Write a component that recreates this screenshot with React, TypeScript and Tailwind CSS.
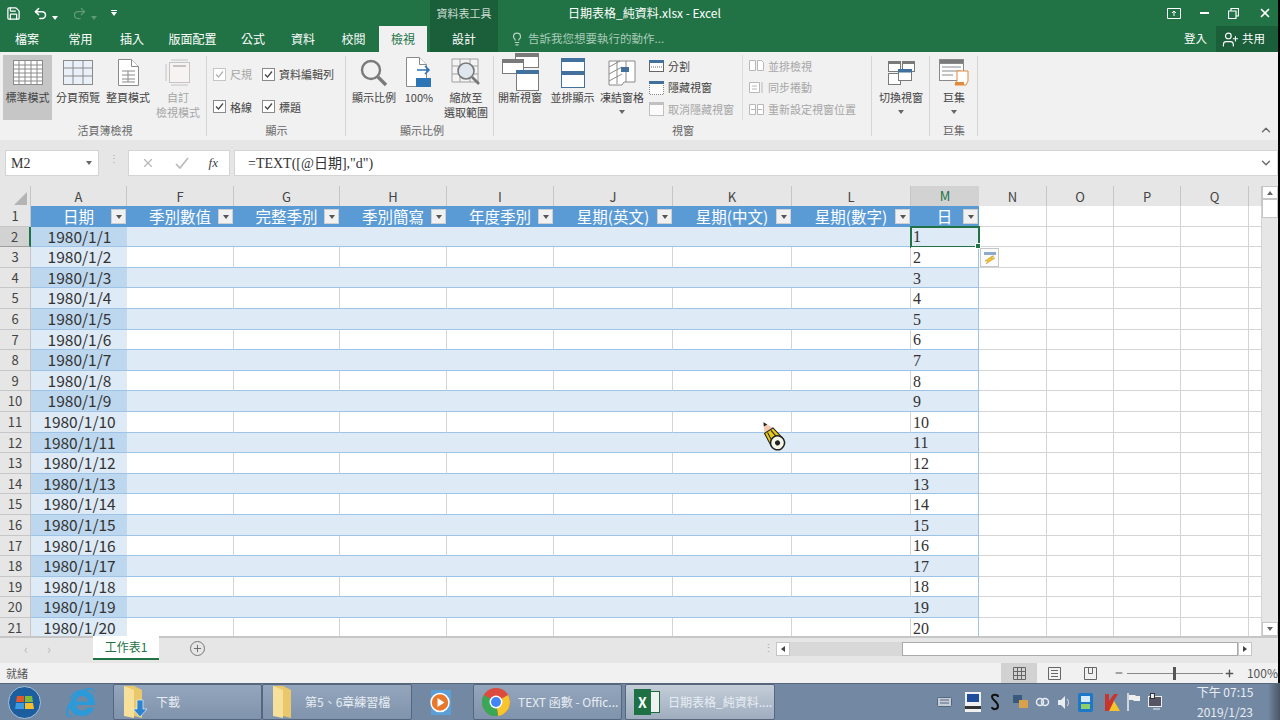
import { FaInternetExplorer } from "react-icons/fa";
import { ChevronDown, ChevronUp, Lightbulb, Minus, Plus, Redo2, Save, Undo2, UserPlus, X } from "lucide-react";

const cols = ["A", "F", "G", "H", "I", "J", "K", "L", "M", "N", "O", "P", "Q", ""];
const heads = ["日期", "季別數值", "完整季別", "季別簡寫", "年度季別", "星期(英文)", "星期(中文)", "星期(數字)", "日"];
const rows = Array.from({ length: 20 }, (_, i) => i + 1);
const gridCols = "grid grid-cols-[31px_96px_107px_106px_107px_107px_119px_119px_119px_68px_68px_67px_67px_68px_13px]";

function Tri({ className = "border-t-[#666]" }: { className?: string }) {
  return <span className={`inline-block h-0 w-0 border-x-[3px] border-t-[4px] border-x-transparent ${className}`} />;
}

function BigBtn({ icon, label, w, active, off, arrow }: { icon: React.ReactNode; label: string[]; w: string; active?: boolean; off?: boolean; arrow?: boolean }) {
  return (
    <div className={`flex h-[65px] flex-col items-center ${w} ${active ? "bg-[#c6c6c6]" : ""} ${off ? "text-[#a6a6a6]" : "text-[#444]"}`}>
      <div className="flex h-[35px] items-center justify-center">{icon}</div>
      {label.map((l) => (
        <div key={l} className="whitespace-nowrap text-[11px] leading-[15px]">{l}</div>
      ))}
      {arrow && <div className="mt-[1px] flex h-[12px] items-center"><Tri /></div>}
    </div>
  );
}

function Group({ w, label, children }: { w: string; label: string; children: React.ReactNode }) {
  return (
    <div className={`relative flex shrink-0 flex-col ${w}`}>
      <div className="mt-[3px] flex h-[65px]">{children}</div>
      <div className="mt-[3px] text-center text-[11px] leading-[15px] text-[#666]">{label}</div>
      <div className="absolute right-0 top-[4px] h-[80px] w-px bg-[#d6d6d6]" />
    </div>
  );
}

function Check({ label, off, w }: { label: string; off?: boolean; w?: string }) {
  return (
    <div className={`flex items-center gap-[4px] text-[11px] ${w ?? ""} ${off ? "text-[#a6a6a6]" : "text-[#444]"}`}>
      <span className={`flex h-[13px] w-[13px] items-center justify-center border bg-white ${off ? "border-[#c6c6c6]" : "border-[#8a8a8a]"}`}>
        <svg width="9" height="9" viewBox="0 0 9 9" fill="none" stroke={off ? "#b0b0b0" : "#444"} strokeWidth="1.2"><path d="M1 4.5 3.5 7 8 1.5" /></svg>
      </span>
      {label}
    </div>
  );
}

function Small({ icon, label, off }: { icon: React.ReactNode; label: string; off?: boolean }) {
  return (
    <div className={`flex h-[22px] items-center gap-[4px] whitespace-nowrap text-[11px] ${off ? "text-[#a6a6a6]" : "text-[#444]"}`}>
      <span className="flex w-[15px] justify-center">{icon}</span>
      {label}
    </div>
  );
}

const Sheet = ({ dashed }: { dashed?: boolean }) => (
  <svg width="30" height="25" viewBox="0 0 30 25" fill={dashed ? "#eaf0f8" : "#fff"} stroke="#8a8a8a" strokeWidth="1">
    <rect x=".5" y=".5" width="29" height="24" />
    <path d={dashed ? "M10 1v23M20 1v23M1 8h28M1 16h28" : "M6 1v23M12 1v23M18 1v23M24 1v23M1 5h28M1 9h28M1 13h28M1 17h28M1 21h28"} />
  </svg>
);

const WinIcon = () => (
  <svg width="37" height="39" viewBox="0 0 37 39" fill="#fff" stroke="#7a7a7a">
    <rect x="13.5" y=".5" width="23" height="14" /><rect x="13.5" y=".5" width="23" height="3" fill="#7a7a7a" />
    <rect x=".5" y="6.5" width="21" height="14" /><rect x=".5" y="6.5" width="21" height="3" fill="#7a7a7a" />
    <rect x="14.5" y="17.5" width="22" height="20" /><rect x="14.5" y="17.5" width="22" height="3" fill="#41719c" stroke="#41719c" />
  </svg>
);

const Mag = ({ s = 28 }: { s?: number }) => (
  <svg width={s} height={s} viewBox="0 0 28 28" fill="none" stroke="#7a7a7a"><circle cx="11" cy="11" r="9" strokeWidth="2.4" /><path d="m18 18 8 8" strokeWidth="3.4" /></svg>
);

function Ribbon() {
  return (
    <div className="flex h-[88px] bg-[#f1f1f1]">
      <Group w="w-[207px] pl-[3px]" label="活頁簿檢視">
        <BigBtn w="w-[49px]" active label={["標準模式"]} icon={<Sheet />} />
        <BigBtn w="w-[52px]" label={["分頁預覽"]} icon={<Sheet dashed />} />
        <BigBtn w="w-[48px]" label={["整頁模式"]} icon={
          <svg width="21" height="27" viewBox="0 0 21 27" fill="#fff" stroke="#8a8a8a"><path d="M.5.5h13l7 7v19H.5z" /><path d="M13.5.5v7h7M4 12h13M4 16h13M4 20h13M4 23h13M10 12v11" /></svg>
        } />
        <BigBtn w="w-[52px]" off label={["自訂", "檢視模式"]} icon={
          <svg width="27" height="27" viewBox="0 0 27 27" fill="none" stroke="#c4c4c4"><rect x="4.5" y="3.5" width="20" height="20" fill="#f7f3f3" /><path d="M8 7h13" strokeWidth="2" /><path d="M1 5v17M6 1h17M6 26h17" /></svg>
        } />
      </Group>
      <Group w="w-[139px]" label="顯示">
        <div className="flex flex-col gap-[16px] pl-[6px] pt-[11px]">
          <Check off w="w-[49px]" label="尺規" />
          <Check w="w-[49px]" label="格線" />
        </div>
        <div className="flex flex-col gap-[16px] pt-[11px]">
          <Check label="資料編輯列" />
          <Check label="標題" />
        </div>
      </Group>
      <Group w="w-[148px] pl-[4px]" label="顯示比例">
        <BigBtn w="w-[48px]" label={["顯示比例"]} icon={<Mag />} />
        <BigBtn w="w-[42px]" label={["100%"]} icon={
          <svg width="26" height="31" viewBox="0 0 26 31" fill="#fff" stroke="#8a8a8a"><path d="M.5.5h13l7 7v22H.5z" /><path d="M13.5.5v7h7" /><rect x="10" y="21" width="15" height="9" fill="#2e75b6" stroke="none" /><path d="M11 13h12m-4-4 4 4-4 4" fill="none" stroke="#2e75b6" strokeWidth="1.6" /></svg>
        } />
        <BigBtn w="w-[52px]" label={["縮放至", "選取範圍"]} icon={
          <svg width="30" height="30" viewBox="0 0 30 30" fill="#f4f4f4" stroke="#a0a0a0"><path d="M1 1h26v23H1zM9 1v23M19 1v23M1 8h26M1 16h26" /><circle cx="15" cy="13" r="8" fill="#dfe6ee" stroke="#777" strokeWidth="1.6" /><path d="m21 19 7 7" stroke="#777" strokeWidth="2.6" /></svg>
        } />
      </Group>
      <Group w="w-[378px]" label="視窗">
        <BigBtn w="w-[52px]" label={["開新視窗"]} icon={<WinIcon />} />
        <BigBtn w="w-[53px]" label={["並排顯示"]} icon={
          <svg width="24" height="30" viewBox="0 0 24 30" fill="#fff" stroke="#41719c"><rect x=".5" y=".5" width="23" height="14" /><rect x=".5" y=".5" width="23" height="3" fill="#41719c" /><rect x=".5" y="13.5" width="23" height="16" /><rect x=".5" y="13.5" width="23" height="3" fill="#41719c" /></svg>
        } />
        <BigBtn w="w-[46px]" arrow label={["凍結窗格"]} icon={
          <svg width="28" height="26" viewBox="0 0 28 26" fill="#fff" stroke="#8a8a8a"><path d="M1 1h26v21H16l-2 3H1z" /><path d="M1 7 12 1M1 14 14 7M1 21 14 14M9 1v23M18 1v21" /><rect x="13" y="7" width="8" height="5" fill="#41719c" stroke="none" /></svg>
        } />
        <div className="flex w-[97px] flex-col pl-[4px] pt-[0px]">
          <Small label="分割" icon={<svg width="15" height="12" viewBox="0 0 15 12" fill="#fff" stroke="#666"><rect x=".5" y=".5" width="14" height="11" /><rect x=".5" y=".5" width="14" height="2" fill="#41719c" stroke="#41719c" /><path d="M2 7h11" strokeDasharray="1 1" /></svg>} />
          <Small label="隱藏視窗" icon={<svg width="15" height="14" viewBox="0 0 15 14" fill="#fff" stroke="#888"><path d="M.5 2v11.5h14V2" strokeDasharray="1 1" /><rect x=".5" y=".5" width="14" height="2" fill="#41719c" stroke="#41719c" /></svg>} />
          <Small off label="取消隱藏視窗" icon={<svg width="15" height="14" viewBox="0 0 15 14" fill="#fbfbfb" stroke="#c0c0c0"><rect x=".5" y=".5" width="14" height="13" /><rect x=".5" y=".5" width="14" height="2" fill="#c0c0c0" /></svg>} />
        </div>
        <div className="flex flex-col border-l border-[#dcdcdc] pl-[6px]">
          <Small off label="並排檢視" icon={<svg width="15" height="11" viewBox="0 0 15 11" fill="#fff" stroke="#b8b8b8"><path d="M.5.5h6v10h-6zM8.5.5h4l2 2v8h-6z" /></svg>} />
          <Small off label="同步捲動" icon={<svg width="15" height="13" viewBox="0 0 15 13" fill="#fff" stroke="#b8b8b8"><path d="M.5 1.500h10v10h-10zM3 5h5M3 8h5M13 1v11" /></svg>} />
          <Small off label="重新設定視窗位置" icon={<svg width="15" height="11" viewBox="0 0 15 11" fill="#fff" stroke="#b8b8b8"><path d="M.5.5h6v10h-6zM8.500.5h6v10h-6zM9 5.500h4M2 5.500h4" /></svg>} />
        </div>
      </Group>
      <Group w="w-[58px]" label="">
        <BigBtn w="w-full" arrow label={["切換視窗"]} icon={
          <svg width="27" height="24" viewBox="0 0 27 24" fill="#fff" stroke="#7a7a7a"><rect x=".5" y=".5" width="12" height="10" /><rect x=".5" y=".5" width="12" height="2" fill="#7a7a7a" /><rect x="14.500" y=".5" width="12" height="10" /><rect x="14.500" y=".5" width="12" height="2" fill="#7a7a7a" /><rect x=".5" y="12.500" width="12" height="11" /><rect x="10.500" y="8.500" width="13" height="11" /><rect x="10.500" y="8.500" width="13" height="2.500" fill="#41719c" stroke="#41719c" /></svg>
        } />
      </Group>
      <Group w="w-[48px]" label="巨集">
        <BigBtn w="w-full" arrow label={["巨集"]} icon={
          <svg width="30" height="27" viewBox="0 0 30 27" fill="#fdfdfd" stroke="#8a8a8a"><rect x=".5" y=".5" width="24" height="21" /><rect x=".5" y=".5" width="24" height="4" fill="#7a7a7a" /><path d="M3 8h19M3 12h19M3 16h11" /><path d="M18 12h11v10l-2 4H16l2-4z" fill="#fff" stroke="#e08a3c" /><path d="M16 23h9v3h-9z" fill="#e08a3c" stroke="none" /></svg>
        } />
      </Group>
      <div className="flex flex-1 items-end justify-end pb-[3px] pr-[5px]">
        <ChevronUp size={14} strokeWidth={2.2} className="text-[#666]" />
      </div>
    </div>
  );
}

function FormulaBar() {
  return (
    <div className="flex h-[46px] bg-[#e6e6e6] pb-[10px] pt-[10px]">
      <div className="ml-[5px] flex w-[94px] items-center justify-between border border-[#d4d4d4] bg-white pl-[5px] pr-[6px] font-['Liberation_Serif',serif] text-[14px] text-[#333]">
        M2<Tri />
      </div>
      <div className="flex w-[29px] justify-center pt-[5px] text-[10px] leading-[5px] text-[#aaa]">⋮</div>
      <div className="flex w-[102px] items-center justify-between border border-[#d4d4d4] bg-white pl-[12px] pr-[11px]">
        <X size={14} className="text-[#b8b8b8]" />
        <svg width="14" height="12" viewBox="0 0 14 12" fill="none" stroke="#b8b8b8" strokeWidth="1.600"><path d="m1 7 4 4 8-10" /></svg>
        <span className="font-['Liberation_Serif',serif] text-[13px] italic text-[#444]">fx</span>
      </div>
      <div className="ml-[4px] flex flex-1 items-center justify-between border border-[#d4d4d4] bg-white pl-[13px] pr-[4px] font-['Liberation_Serif','Noto_Sans_CJK_TC',serif] text-[14px] text-[#333]">
        =TEXT([@日期],"d")
        <ChevronDown size={14} strokeWidth={2.2} className="text-[#666]" />
      </div>
    </div>
  );
}

function HeaderRow() {
  return (
    <div className={`${gridCols} h-[20px] bg-[#e6e6e6]`}>
      <div className="relative border-r border-[#c6c6c6]">
        <svg className="absolute bottom-[3px] right-[3px]" width="13" height="13" viewBox="0 0 13 13"><path d="M13 0v13H0z" fill="#b4b4b4" /></svg>
      </div>
      {cols.map((c, i) => (
        <div key={i} className={`flex items-center justify-center text-[13px] ${c === "M" ? "border-b-2 border-[#217346] bg-[#d2d2d2] text-[#217346]" : "border-b border-r border-[#c6c6c6] text-[#444]"}`}>{c}</div>
      ))}
    </div>
  );
}

function Row({ n }: { n: number }) {
  const idx = n - 1;
  const band = n % 2 === 0;
  return (
    <div className={`${gridCols} h-[20.600px]`}>
      <div className={`flex items-center justify-center border-b border-r text-[13px] text-[#444] ${n === 2 ? "border-r-2 border-r-[#217346] border-b-[#9e9e9e] bg-[#d2d2d2]" : "border-[#c6c6c6] bg-[#e6e6e6]"}`}>{n}</div>
      {cols.map((c, i) => {
        if (n === 1) {
          if (i >= heads.length)
            return <div key={i} className="border-b border-r border-[#d4d4d4] bg-white" />;
          return (
            <div key={i} className="relative flex items-center justify-center bg-[#5b9bd5] pr-[1px] text-[15.500px] leading-none text-white">
              {heads[i]}
              <span className="absolute right-[1px] top-[3px] flex h-[15px] w-[15px] items-center justify-center border border-[#d0d0d0] bg-[#f1f1f1]"><Tri className="border-t-[#555]" /></span>
            </div>
          );
        }
        if (i === 0)
          return (
            <div key={i} className={`flex items-center justify-center border-b border-[#9dc3e6] pl-[1px] text-[15.500px] leading-none text-[#333] ${band ? "bg-[#bdd7ee]" : "bg-[#deeaf6]"}`}>
              1980/1/{idx}
            </div>
          );
        if (c === "M")
          return (
            <div key={i} className={`relative flex items-center border-b border-r border-b-[#9dc3e6] border-r-[#9dc3e6] pl-[2px] pt-[2px] font-['Liberation_Serif',serif] text-[16px] leading-none text-[#333] ${band ? "bg-[#deeaf6]" : "bg-white"}`}>
              {idx}
              {n === 2 && (
                <>
                  <span className="absolute -left-px -top-px h-[22px] w-[70px] border-2 border-[#217346]" />
                  <span className="absolute -bottom-[3px] -right-[3px] z-10 h-[6px] w-[6px] border border-white bg-[#217346]" />
                </>
              )}
              {n === 3 && (
                <span className="absolute left-[69px] top-[1px] z-10 flex h-[19px] w-[19px] items-center justify-center border border-[#c6c6c6] bg-[#fbfbfb]">
                  <svg width="14" height="13" viewBox="0 0 14 13"><rect x="1" y="1" width="12" height="3" fill="#8ea9c9" /><path d="m9 5-7 5h3l-2 3 9-6H8l3-2z" fill="#f2c230" stroke="#b08a10" strokeWidth=".4" /></svg>
                </span>
              )}
            </div>
          );
        if (i < heads.length)
          return <div key={i} className={`border-b border-[#9dc3e6] ${band ? "bg-[#deeaf6]" : "border-r border-r-[#d4d4d4] bg-white"}`} />;
        return <div key={i} className="border-b border-r border-[#d4d4d4] bg-white" />;
      })}
    </div>
  );
}

function Pencil() {
  return (
    <svg className="absolute left-[761px] top-[232px] z-20" width="28" height="34" viewBox="0 0 28 34">
      <g transform="rotate(-32 14 17)">
        <path d="M11 0 6 10h10z" fill="#f3c9b0" />
        <path d="M11 0 9 4h4z" fill="#222" />
        <path d="M6 10h10l3 14H5z" fill="#e8c81c" stroke="#222" strokeWidth="1" />
        <path d="M9 11 8 24M13 11l2 13" stroke="#222" />
        <circle cx="12" cy="25" r="7" fill="#f5f5e8" stroke="#222" strokeWidth="1.500" />
        <circle cx="12" cy="25" r="2.500" fill="#222" />
      </g>
    </svg>
  );
}

function Grid() {
  return (
    <div className="relative flex h-[450px]">
      <div className="h-[450px] w-[1262px] overflow-hidden">
        <HeaderRow />
        <div className="overflow-visible">
          {rows.concat([21]).map((n) => <Row key={n} n={n} />)}
        </div>
      </div>
      <Pencil />
      <div className="flex w-[16px] flex-col bg-[#e6e6e6]">
        <div className="flex h-[13px] items-center justify-center border border-[#c6c6c6] bg-white"><Tri className="rotate-180 border-t-[#666]" /></div>
        <div className="h-[19px] border border-[#c6c6c6] bg-white" />
        <div className="flex-1" />
        <div className="flex h-[14px] items-center justify-center border border-[#c6c6c6] bg-white"><Tri /></div>
      </div>
    </div>
  );
}

function SheetBar() {
  return (
    <div className="flex h-[27px] items-start border-t-2 border-[#c6c6c6] bg-[#e6e6e6]">
      <div className="flex w-[93px] gap-[19px] pl-[24px] pt-[4px] text-[13px] leading-[14px] text-[#bbb]"><span>‹</span><span>›</span></div>
      <div className="-mt-[2px] flex h-[24px] w-[66px] items-center justify-center border-b-[2px] border-[#217346] bg-white text-[12px] text-[#217346]">工作表1</div>
      <div className="ml-[31px] mt-[3px] flex h-[15px] w-[15px] items-center justify-center rounded-full border border-[#777] text-[#666]"><Plus size={11} strokeWidth={2} /></div>
      <div className="ml-[555px] mt-[1px] w-[16px] text-center text-[11px] leading-[16px] text-[#aaa]">⋮</div>
      <div className="mt-[4px] flex h-[14px] w-[476px]">
        <div className="flex w-[14px] items-center justify-center border border-[#c6c6c6] bg-white"><Tri className="rotate-90 border-t-[#444]" /></div>
        <div className="w-[112px] bg-[#d8d8d8]" />
        <div className="flex-1 border border-[#aaa] bg-white" />
        <div className="flex w-[14px] items-center justify-center border border-[#c6c6c6] bg-white"><Tri className="-rotate-90 border-t-[#444]" /></div>
      </div>
    </div>
  );
}

function StatusBar() {
  return (
    <div className="flex h-[20px] items-center bg-[#f1f1f1] pl-[6px] text-[#555]">
      <span className="w-[996px] text-[11px]">就緒</span>
      <div className="flex h-full w-[36px] items-center justify-center bg-[#d2d2d2]">
        <svg width="13" height="13" viewBox="0 0 13 13" fill="none" stroke="#666"><path d="M.5.5h12v12H.5zM4.500 1v11M8.500 1v11M1 4.500h11M1 8.500h11" /></svg>
      </div>
      <div className="flex w-[35px] justify-center">
        <svg width="13" height="13" viewBox="0 0 13 13" fill="none" stroke="#666"><path d="M.5.5h12v12H.5zM3 3.500h7M3 6.500h7M3 9.500h7" /></svg>
      </div>
      <div className="flex w-[36px] justify-center">
        <svg width="13" height="13" viewBox="0 0 13 13" fill="none" stroke="#666"><path d="M.5.5h12v12H.5zM4.500 .5v6h4v-6" /></svg>
      </div>
      <Minus size={10} strokeWidth={3} className="ml-[6px]" />
      <div className="relative ml-[3px] h-px w-[96px] bg-[#888]">
        <span className="absolute left-[46px] top-[-6px] h-[13px] w-[3px] bg-[#555]" />
      </div>
      <Plus size={11} strokeWidth={3} className="ml-[1px]" />
      <span className="ml-[12px] text-[12px]">100%</span>
    </div>
  );
}

function Folder({ blue }: { blue?: boolean }) {
  return (
    <svg width="26" height="36" viewBox="0 0 26 36">
      <path d="M2 2h10l8 4v28l-8-2H2z" fill="#e8c86a" />
      <path d="M2 2 12 6v28L2 32z" fill="#f6e09a" />
      {blue && <path d="M15 16h6v9h4l-7 8-7-8h4z" fill="#2c83d2" stroke="#fff" strokeWidth=".6" />}
    </svg>
  );
}

function TaskBtn({ w, icon, label, active, plain }: { w: string; icon: React.ReactNode; label?: string; active?: boolean; plain?: boolean }) {
  return (
    <div className={`flex h-full items-center gap-[8px] overflow-hidden whitespace-nowrap pl-[8px] text-[12px] text-[#e8edf3] ${w} ${plain ? "" : "rounded-[2px] border border-[#55667d]"} ${active ? "bg-gradient-to-b from-[#c4cdd8] to-[#9fadbf]" : plain ? "" : "bg-gradient-to-b from-[#94a6bc] to-[#7f93ac]"}`}>
      {icon}
      {label}
    </div>
  );
}

const Tray = ({ children }: { children: React.ReactNode }) => <div className="flex w-[21.500px] shrink-0 justify-center">{children}</div>;

function Taskbar() {
  return (
    <div className="flex h-[37px] items-center border-t border-[#55667d] bg-[#7388a3]">
      <div className="flex w-[48px] justify-center">
        <svg width="33" height="33" viewBox="0 0 33 33">
          <circle cx="16.500" cy="16.500" r="16" fill="#1d5f9e" stroke="#a9c0d6" />
          <path d="M9 10h7v6H8z" fill="#e2582c" /><path d="M17 10h7l1 6h-8z" fill="#7fba3a" /><path d="M8 17h8v6H7z" fill="#3a9be0" /><path d="M17 17h8l1 6h-9z" fill="#f5c02c" />
        </svg>
      </div>
      <div className="flex w-[65px] justify-center"><FaInternetExplorer size={29} className="text-[#2c9ad8]" /></div>
      <TaskBtn w="w-[149px]" label="下載" icon={<Folder blue />} />
      <TaskBtn w="w-[150px]" label="第5、6章練習檔" icon={<Folder />} />
      <TaskBtn plain w="w-[61px] pl-[17px]" icon={
        <svg width="24" height="27" viewBox="0 0 24 27"><rect x="2" y="1" width="20" height="25" fill="#5a9fd6" /><circle cx="11" cy="13.500" r="9" fill="#e8792c" stroke="#fff" strokeWidth="1.500" /><path d="m8.500 9 7 4.500-7 4.500z" fill="#fff" /></svg>
      } />
      <TaskBtn w="w-[149px]" label="TEXT 函數 - Offic..." icon={
        <svg width="28" height="28" viewBox="0 0 28 28"><circle cx="14" cy="14" r="14" fill="#dd4b3e" /><path d="M14 14 26 7a14 14 0 0 1-10 21z" fill="#f6c52c" /><path d="M14 14 16 28A14 14 0 0 1 2 7z" fill="#3aa757" /><circle cx="14" cy="14" r="6.500" fill="#fff" /><circle cx="14" cy="14" r="5" fill="#4286f5" /></svg>
      } />
      <div className="w-[3px]" />
      <TaskBtn active w="w-[150px]" label="日期表格_純資料...." icon={
        <span className="relative flex h-[26px] w-[26px] items-center">
          <span className="absolute right-0 h-[22px] w-[14px] border border-[#1e6b41] bg-[#eef3ef]" />
          <span className="relative flex h-[26px] w-[17px] items-center justify-center bg-[#1e7145] text-[14px] font-bold text-white">X</span>
        </span>
      } />
      <div className="w-[159px]" />
      <Tray><svg width="15" height="10" viewBox="0 0 15 10" fill="#c4cdd8" stroke="#55667d"><rect x=".5" y=".5" width="14" height="9" rx="1" /><path d="M3 3h9M3 6h9" /></svg></Tray>
      <div className="w-[7px]" />
      <Tray><svg width="16" height="20" viewBox="0 0 16 20"><rect width="16" height="20" fill="#f0f0f0" /><rect x="2" y="2" width="12" height="8" fill="#1f4d9c" /><rect y="14" width="16" height="3" fill="#333" /></svg></Tray>
      <Tray><svg width="10" height="18" viewBox="0 0 10 18" fill="none" stroke="#111" strokeWidth="2"><path d="M8 4C8 1 2 1 2 4s6 5 6 9-6 4-6 1" /></svg></Tray>
      <div className="w-[5px]" />
      <Tray><svg width="16" height="16" viewBox="0 0 16 16"><rect y="1" width="9" height="8" fill="#39597d" /><rect x="6" y="6" width="9" height="8" fill="#d9a24a" /></svg></Tray>
      <Tray><svg width="15" height="10" viewBox="0 0 15 10" fill="none" stroke="#e8edf3" strokeWidth="1.500"><circle cx="5" cy="5" r="3.500" /><circle cx="10" cy="5" r="3.500" /></svg></Tray>
      <Tray><svg width="14" height="15" viewBox="0 0 14 15" fill="#e8edf3"><path d="M1 5h3l4-4v13l-4-4H1z" /><path d="M10 4c2 2 2 5 0 7" fill="none" stroke="#e8edf3" /></svg></Tray>
      <Tray><svg width="15" height="19" viewBox="0 0 15 19"><rect width="15" height="19" rx="2" fill="#1e78c8" /><rect x="3" y="3" width="9" height="6" fill="#d5ecf8" /><rect x="3" y="11" width="9" height="5" fill="#8dd06a" /></svg></Tray>
      <div className="w-[5px]" />
      <Tray><svg width="16" height="18" viewBox="0 0 16 18"><path d="M1 1h4v7l5-7h4L9 9l5 9H1z" fill="#c9342f" /><path d="m10 8 6 10H5z" fill="#f3c42c" /></svg></Tray>
      <Tray><svg width="14" height="18" viewBox="0 0 14 18"><path d="M1 0v18" stroke="#eee" strokeWidth="1.500" /><path d="M2 2h6l1 1h4v5H7L6 7H2z" fill="#eee" /></svg></Tray>
      <Tray><svg width="14" height="18" viewBox="0 0 14 18" fill="#556" stroke="#eee"><rect x=".5" y="3.500" width="13" height="10" /><rect x="2.500" y=".5" width="4" height="5" fill="#eee" stroke="#333" /><path d="M5 16h7" /></svg></Tray>
      <div className="w-[28px]" />
      <div className="flex w-[62px] flex-col items-center text-[12px] leading-[20px] text-[#e8edf3]">
        <span className="whitespace-nowrap">下午 07:15</span>
        <span>2019/1/23</span>
      </div>
      <div className="ml-auto h-full w-[12px] bg-gradient-to-r from-[#7388a3] to-[#4a5666]" />
    </div>
  );
}

export default function App() {
  return (
    <div className="h-[720px] w-[1280px] overflow-hidden bg-black font-['Noto_Sans_CJK_TC','Liberation_Sans',sans-serif] text-[#444]">
      <div className="w-[1278px]">
        <div className="flex h-[52px] bg-[#217346] text-white">
          <div className="w-[430px]">
            <div className="flex h-[26px] items-center pl-[6px]">
              <Save size={15} strokeWidth={2} />
              <Undo2 size={15} strokeWidth={2.4} className="ml-[12px]" />
              <span className="ml-[4px]"><Tri className="border-t-white" /></span>
              <Redo2 size={15} strokeWidth={2} className="ml-[14px] text-[#5d9a78]" />
              <span className="ml-[4px]"><Tri className="border-t-[#5d9a78]" /></span>
              <span className="ml-[14px] flex flex-col items-center gap-[1px]"><span className="h-px w-[6px] bg-white" /><Tri className="border-t-white" /></span>
            </div>
            <div className="flex h-[26px] text-[12px]">
              {[["檔案", "w-[54px]"], ["常用", "w-[53px]"], ["插入", "w-[50px]"], ["版面配置", "w-[71px]"], ["公式", "w-[50px]"], ["資料", "w-[50px]"], ["校閱", "w-[51px]"]].map(([t, w]) => (
                <div key={t} className={`flex items-center justify-center ${w}`}>{t}</div>
              ))}
              <div className="flex w-[48px] items-center justify-center bg-[#f1f1f1] text-[#217346]">檢視</div>
            </div>
          </div>
          <div className="flex w-[68px] flex-col bg-[#1b5e3a] text-center text-[12px]">
            <div className="flex h-[26px] items-center justify-center text-[11px] text-[#c9dcd0]">資料表工具</div>
            <div className="flex h-[26px] items-center justify-center">設計</div>
          </div>
          <div className="flex-1">
            <div className="flex h-[26px] items-center">
              <span className="ml-[70px] whitespace-nowrap text-[12px]">日期表格_純資料.xlsx - Excel</span>
              <div className="ml-auto flex items-center gap-[19px] pr-[6px]">
                <svg width="14" height="11" viewBox="0 0 14 11" fill="none" stroke="#fff"><path d="M.5.5h13v10H.5zM7 8V3M5 5l2-2 2 2" /></svg>
                <span className="h-[2px] w-[9px] bg-white" />
                <svg width="11" height="11" viewBox="0 0 11 11" fill="none" stroke="#fff" strokeWidth="1.200"><path d="M.5 3h7.500v7.500H.5zM3 3V.5h7.500V8H8" /></svg>
                <X size={14} strokeWidth={3} />
              </div>
            </div>
            <div className="flex h-[26px] items-center">
              <Lightbulb size={14} className="ml-[12px] text-[#b9d3c4]" />
              <span className="ml-[4px] whitespace-nowrap text-[11.500px] text-[#a9cbb7]">告訴我您想要執行的動作...</span>
              <span className="ml-auto text-[11.500px]">登入</span>
              <div className="ml-[9px] flex h-full w-[62px] items-center gap-[3px] bg-[#1b5e3a] pl-[6px] text-[11.500px]">
                <UserPlus size={17} strokeWidth={1.6} />共用
              </div>
            </div>
          </div>
        </div>
        <Ribbon />
        <FormulaBar />
        <Grid />
        <SheetBar />
        <StatusBar />
      </div>
      <div className="relative w-[1280px]"><Taskbar /></div>
    </div>
  );
}
